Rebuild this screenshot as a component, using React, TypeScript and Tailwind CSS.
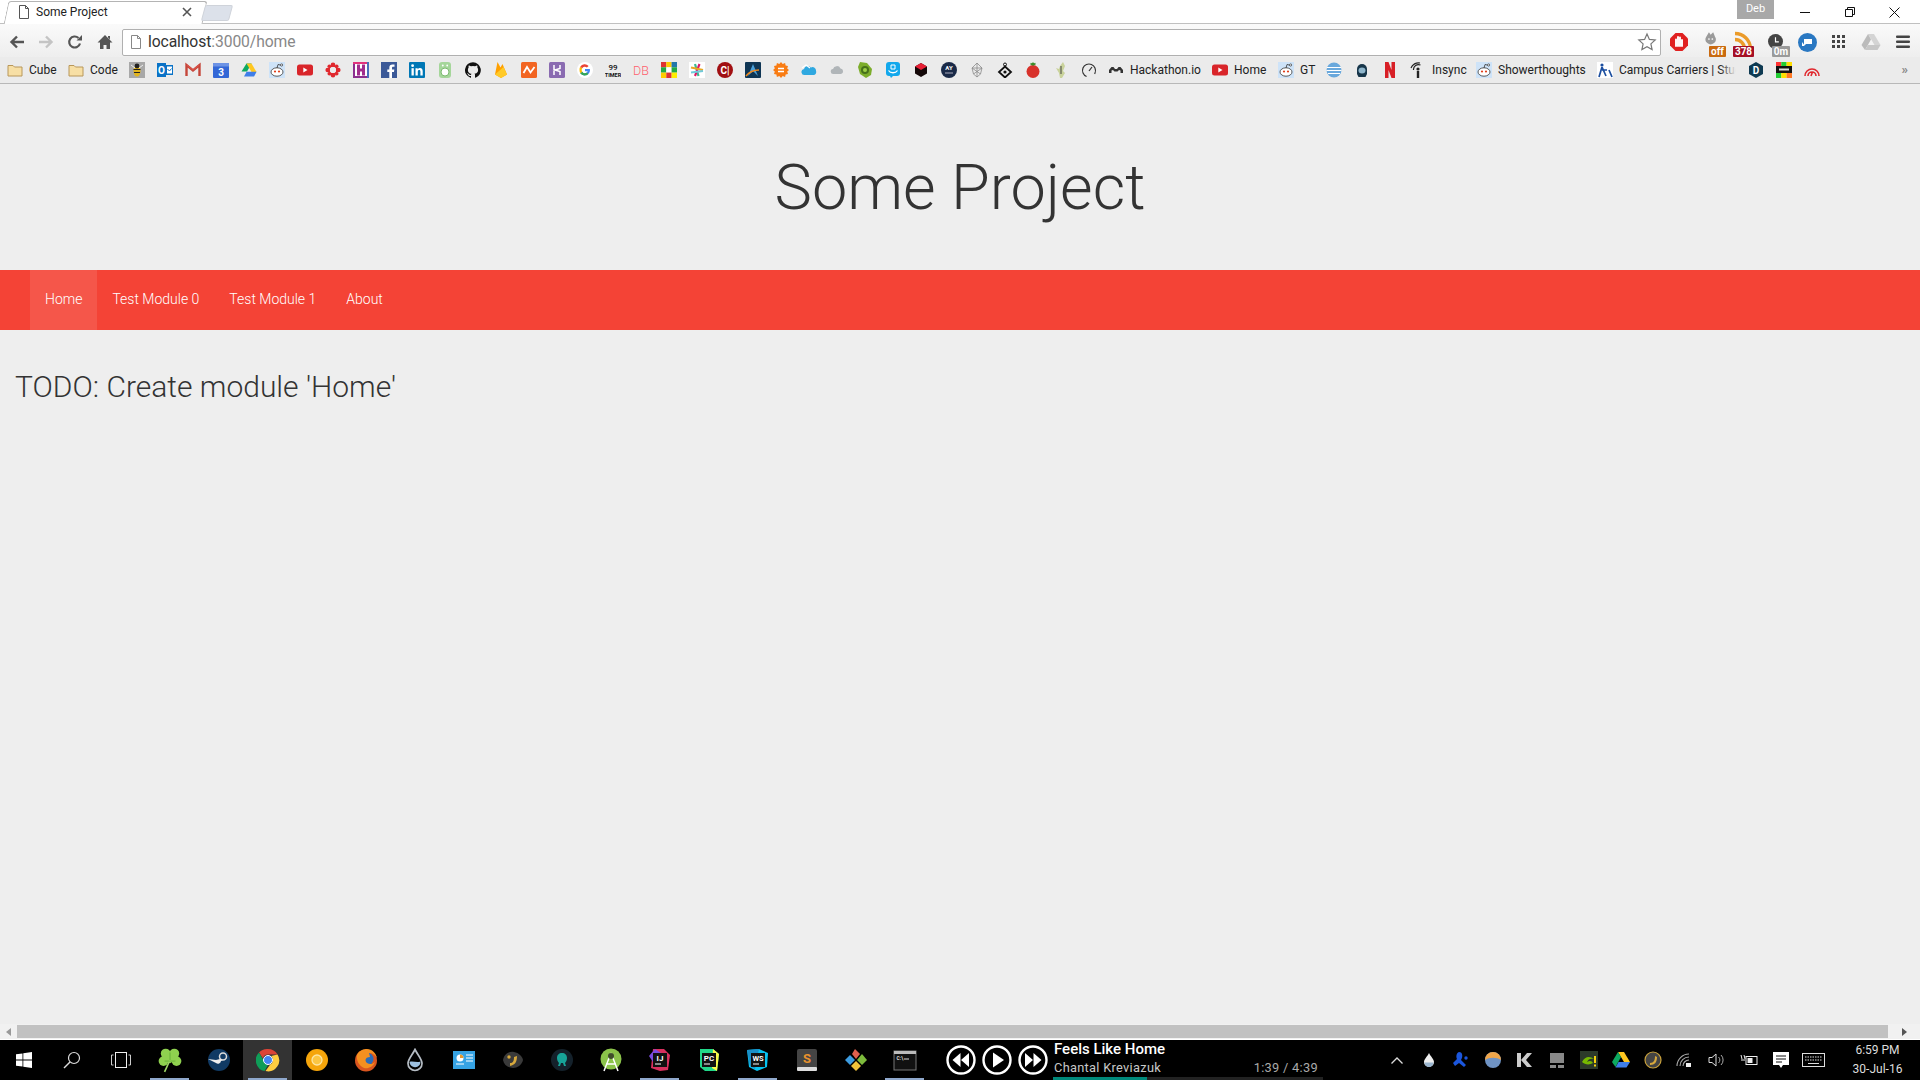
import React from "react";

type P = { children: React.ReactNode; s?: number; v?: number };
const I = ({ children, s = 16, v = 16 }: P) => (
  <svg width={s} height={s} viewBox={`0 0 ${v} ${v}`} className="shrink-0 block">
    {children}
  </svg>
);

const Folder = () => (
  <I>
    <path d="M1 3.5h5l1.5 1.5H15v9H1z" fill="#f7dfa5" stroke="#b8975a" />
  </I>
);
const PageIcon = ({ c = "#555" }: { c?: string }) => (
  <I>
    <path d="M3.5 1.5h6l3 3v10h-9z M9.5 1.5v3h3" fill="#fff" stroke={c} />
  </I>
);
const Reddit = () => (
  <I>
    <rect width="16" height="16" fill="#cee3f8" />
    <ellipse cx="8" cy="10" rx="6" ry="4.2" fill="#fff" stroke="#333" strokeWidth=".8" />
    <circle cx="6" cy="9.5" r="1.1" fill="#e0401c" />
    <circle cx="10" cy="9.5" r="1.1" fill="#e0401c" />
    <path d="M8 6l1-3.5 3 .7" stroke="#333" fill="none" strokeWidth=".8" />
    <circle cx="12.6" cy="3" r="1.1" fill="#fff" stroke="#333" strokeWidth=".7" />
  </I>
);
const Yt = () => (
  <I>
    <rect y="2.5" width="16" height="11" rx="2.5" fill="#d9252a" />
    <path d="M6.3 5.5v5l4.2-2.5z" fill="#fff" />
  </I>
);
const Txt = ({ t, x = 8, y = 12, z = 10, c = "#fff", w = 700 }: { t: string; x?: number; y?: number; z?: number; c?: string; w?: number }) => (
  <text x={x} y={y} fontSize={z} fill={c} fontWeight={w} textAnchor="middle" fontFamily="Roboto, sans-serif">
    {t}
  </text>
);
const Drive = () => (
  <I>
    <path d="M5.5 1.5h5L6 9.5H.5z" fill="#0da960" />
    <path d="M5.5 1.5h5l5 8.5h-5z" fill="#ffc720" />
    <path d="M3 14.500h10l2.600-4.700H5.600z" fill="#3f7ee8" />
  </I>
);

const icons: React.ReactNode[] = [
  <I><rect width="16" height="16" fill="#a8a8a8" /><ellipse cx="8" cy="9" rx="3.500" ry="5.500" fill="#e3b51c" /><path d="M4.500 7.500h7M5 10.500h6" stroke="#222" strokeWidth="1.200" /><circle cx="8" cy="4" r="2.400" fill="#222" /><path d="M2 3l4 3M14 3l-4 3" stroke="#eee" /></I>,
  <I><rect width="9" height="14" y="1" fill="#0a72c6" /><rect x="9" y="3" width="7" height="10" fill="#0a72c6" /><rect x="10" y="4.500" width="5" height="7" fill="#fff" /><path d="M10.500 7l2 2 2-2.500" stroke="#0a72c6" fill="none" /><Txt t="O" x={4.500} y={12} z={10} /></I>,
  <I><path d="M1.500 14V3l6.500 5.500L14.500 3v11" fill="none" stroke="#c5463a" strokeWidth="2.400" /><path d="M2 3l6 5 6-5" fill="none" stroke="#d9534a" strokeWidth="1.200" /></I>,
  <I><rect y="1" width="16" height="15" rx="1" fill="#3367d6" /><rect y="1" width="16" height="3.500" fill="#6d93e5" /><Txt t="3" y={13.500} z={10} /></I>,
  <Drive />,
  <Reddit />,
  <Yt />,
  <I><circle cx="8" cy="8" r="4.200" fill="none" stroke="#e0282e" strokeWidth="2" /><circle cx="8" cy="2.700" r="2.300" fill="#e0282e" /><circle cx="8" cy="13.300" r="2.300" fill="#e0282e" /><circle cx="2.700" cy="8" r="2.300" fill="#e0282e" /><circle cx="13.300" cy="8" r="2.300" fill="#e0282e" /><circle cx="4.300" cy="4.300" r="1.800" fill="#e0282e" /><circle cx="11.700" cy="4.300" r="1.800" fill="#e0282e" /><circle cx="4.300" cy="11.700" r="1.800" fill="#e0282e" /><circle cx="11.700" cy="11.700" r="1.800" fill="#e0282e" /></I>,
  <I><rect width="16" height="16" fill="#8c2f8f" /><rect x="2" y="2" width="12" height="12" fill="#fff" /><path d="M0 0h16v2H0z" fill="#e2337d" /><path d="M14 0h2v16h-2z" fill="#4a6fbc" /><path d="M4 2.500h3v4h2v-4h3v11H9v-4H7v4H4z" fill="#a12d8c" /></I>,
  <I><rect width="16" height="16" fill="#3b5998" /><path d="M11 16v-6h2l.3-2.500H11V6c0-.7.3-1.200 1.300-1.200h1.200V2.600c-.5 0-1.200-.1-2-.1-2 0-3.200 1.200-3.200 3.200v1.800h-2V10h2v6z" fill="#fff" /></I>,
  <I><rect width="16" height="16" rx="1" fill="#0077b5" /><rect x="2.500" y="6.200" width="2.300" height="7.300" fill="#fff" /><circle cx="3.600" cy="3.700" r="1.400" fill="#fff" /><path d="M6.500 6.200h2.200v1c.5-.8 1.300-1.200 2.300-1.200 2 0 2.700 1.300 2.700 3.300v4.200h-2.300V9.800c0-1-.3-1.700-1.200-1.700s-1.400.7-1.400 1.700v3.700H6.500z" fill="#fff" /></I>,
  <I><rect x="2" y="0" width="12" height="16" rx="3" fill="#a5d69a" /><circle cx="8" cy="10" r="4" fill="#fff" stroke="#7cb96f" /><circle cx="5.800" cy="3.500" r=".9" fill="#fff" /><circle cx="10.200" cy="3.500" r=".9" fill="#fff" /></I>,
  <I><path d="M8 .2a8 8 0 0 0-2.500 15.600c.4.100.5-.2.500-.4v-1.400c-2.200.5-2.700-1-2.700-1-.4-.9-.9-1.200-.9-1.200-.7-.5.100-.5.100-.5.800.100 1.200.8 1.200.8.700 1.200 1.900.9 2.300.7.100-.5.300-.9.500-1.100-1.800-.2-3.600-.9-3.600-4 0-.9.300-1.600.8-2.100-.1-.2-.4-1 .1-2.100 0 0 .7-.2 2.200.8a7.500 7.500 0 0 1 4 0c1.500-1 2.200-.8 2.200-.8.400 1.100.2 1.900.1 2.100.5.600.8 1.300.8 2.100 0 3.100-1.900 3.700-3.600 3.900.3.200.5.700.5 1.500v2.200c0 .2.100.5.600.4A8 8 0 0 0 8 .2z" fill="#111" /></I>,
  <I><path d="M2 12.500L4.500 0l3 5.500L9.500 2 14 12.500 8 16z" fill="#ffa000" /><path d="M2 12.500L8 16l6-3.500L10.500 5z" fill="#ffca28" /></I>,
  <I><rect width="16" height="16" rx="1.500" fill="#f26522" /><path d="M2.500 11L6 5l3.500 5.500L13.500 5" fill="none" stroke="#fff" strokeWidth="1.800" /></I>,
  <I><rect width="16" height="16" rx="1.500" fill="#8a6bb1" /><path d="M5 3v10M11 3v3.500L6 8l5 1.500V13" fill="none" stroke="#fff" strokeWidth="1.500" /></I>,
  <I><circle cx="8" cy="8" r="8" fill="#fff" /><path d="M12.800 7H8v2.200h2.700a3 3 0 0 1-5.500.5l-2 1.600A5.500 5.500 0 0 0 13 8a5 5 0 0 0-.2-1z" fill="#4285f4" /><path d="M3.200 11.300A5.500 5.500 0 0 0 11.500 12l-1.800-1.500a3 3 0 0 1-4.500-.8z" fill="#34a853" /><path d="M2.500 8c0 1.200.3 2.400.7 3.300l2-1.600a3 3 0 0 1 0-3.400l-2-1.600A5.500 5.500 0 0 0 2.500 8z" fill="#fbbc05" /><path d="M3.200 4.700l2 1.600a3 3 0 0 1 4.700-.7l1.700-1.700a5.500 5.500 0 0 0-8.400.8z" fill="#ea4335" /></I>,
  <I><Txt t="99" y={7.500} z={8} c="#111" w={500} /><Txt t="TIMER" y={15} z={5.500} c="#111" /></I>,
  <I><Txt t="DB" y={13} z={12.500} c="#ff5f6d" w={300} /></I>,
  <I><rect width="5.300" height="5.300" fill="#d33" /><rect x="5.300" width="5.300" height="5.300" fill="#fc0" /><rect x="10.600" width="5.400" height="5.300" fill="#27a" /><rect y="5.300" width="5.300" height="5.300" fill="#2a4" /><rect x="5.300" y="5.300" width="5.300" height="5.300" fill="#fff" /><rect x="10.600" y="5.300" width="5.400" height="5.300" fill="#2a4" /><rect y="10.600" width="5.300" height="5.400" fill="#fc0" /><rect x="5.300" y="10.600" width="5.300" height="5.400" fill="#d33" /><rect x="10.600" y="10.600" width="5.400" height="5.400" fill="#fe0" /></I>,
  <I><rect width="16" height="16" fill="#fff" /><path d="M6 2l3.500 12" stroke="#3eb890" strokeWidth="2.200" /><path d="M10.500 2L6 14" stroke="#e01765" strokeWidth="2.200" /><path d="M2 5.500l12 2.500" stroke="#e8a723" strokeWidth="2.200" /><path d="M2 10.500l12-1.500" stroke="#70cadb" strokeWidth="2.200" /></I>,
  <I><circle cx="8" cy="8" r="8" fill="#a10f12" /><Txt t="C|" y={12} z={10} /></I>,
  <I><rect width="16" height="16" rx="1" fill="#0e3554" /><path d="M3 14L8 2l5 12-5-5z" fill="#4a9fd8" /><path d="M1 14c4-5 8-6 13-6" stroke="#f28a1e" strokeWidth="1.500" fill="none" /></I>,
  <I><path d="M8 0l1.700 2 2.400-1 .5 2.600L15 4l-.8 2.400L16 8l-1.800 1.600.8 2.400-2.400.4-.5 2.600-2.400-1L8 16l-1.700-2-2.400 1-.5-2.600L1 12l.8-2.400L0 8l1.800-1.600L1 4l2.400-.4L3.900 1l2.400 1z" fill="#f97c13" /><path d="M5 6.500h6M5 9.500h6" stroke="#fff" strokeWidth="1.500" /></I>,
  <I><path d="M4 13a3 3 0 0 1-1-6 4 4 0 0 1 7-1.500A3.500 3.500 0 0 1 15 9a3 3 0 0 1-2 4z" fill="#2fa8e0" /><path d="M1 6l4-3 4 3" fill="none" stroke="#fff" strokeWidth="1.200" /></I>,
  <I><path d="M4.500 12a2.500 2.500 0 0 1-.5-5 4 4 0 0 1 7.500-.5 2.800 2.800 0 0 1 .5 5.500z" fill="#b0b5b8" /></I>,
  <I><path d="M3 0l7 1 5 6-1 6-5 3-6-4-2-7z" fill="#7cad2b" /><circle cx="8" cy="8" r="4" fill="#46711a" /><circle cx="8" cy="8" r="2" fill="#9ccf46" /></I>,
  <I><rect x="1" width="14" height="14" rx="3" fill="#12a8ec" /><path d="M6 16l2-2h-3z" fill="#12a8ec" /><path d="M6 3h4v4H6z" fill="none" stroke="#fff" /><path d="M3.500 8.500c2 3 7 3 9 0" fill="none" stroke="#fff" strokeWidth="1.300" /></I>,
  <I><path d="M8 1l6 3.500v7L8 15l-6-3.500v-7z" fill="#140808" /><path d="M8 1l6 3.500L8 8 2 4.500z" fill="#e81f35" /></I>,
  <I><circle cx="8" cy="8" r="8" fill="#1a2a48" /><Txt t="AY" y={8} z={6} /><path d="M4 11h8" stroke="#aab" /></I>,
  <I><path d="M8 1l5 5-1.500 6L8 15l-3.500-3L3 6z M3 6h10M8 1v14M4.500 12L13 6M11.500 12L3 6" fill="none" stroke="#8c8c8c" strokeWidth=".8" /></I>,
  <I><path d="M8 4.500L14 10l-6 5.500L2 10z" fill="none" stroke="#111" strokeWidth="1.800" /><circle cx="8" cy="2.500" r="1.500" fill="none" stroke="#111" /><circle cx="8" cy="10" r="1.600" fill="#111" /></I>,
  <I><circle cx="8" cy="9.500" r="6.500" fill="#d8322b" /><path d="M8 3L5.500 1.500M8 3l2.500-1.500M8 3V.5" stroke="#3d8c2a" strokeWidth="1.500" /></I>,
  <I><path d="M10 0l2 4-2 5 2 2-3 5H7L6 11 3 6l3 1 1-3z" fill="#c9d29b" /><path d="M8 4v8" stroke="#444" /></I>,
  <I><circle cx="8" cy="8.500" r="6.500" fill="none" stroke="#333" strokeWidth="1.200" strokeDasharray="31 10" transform="rotate(112 8 8.500)" /><path d="M8 9l3-4" stroke="#333" strokeWidth="1.200" /></I>,
];

const Link = ({ icon, label, cls = "" }: { icon: React.ReactNode; label: string; cls?: string }) => (
  <div className={`flex items-center gap-[6px] h-6 text-[12px] text-[#222] ${cls}`}>
    {icon}
    <span className="whitespace-nowrap">{label}</span>
  </div>
);

const Cell = ({ children }: { children: React.ReactNode }) => (
  <div className="w-[28px] flex justify-center shrink-0">{children}</div>
);

const TopBar = () => (
  <div className="h-[24px] bg-white flex items-end relative border-b border-[#c0c0c0] font-['Roboto',sans-serif]">
    <div className="ml-[2px] w-[199px] h-[23px] border-t border-x border-[#b4b4b4] rounded-t-[3px] -skew-x-[12deg] bg-white absolute left-[4px] top-[1px] border-b-0" />
    <div className="w-[199px] h-[24px] relative flex items-center pl-[16px] pt-[2px] text-[12px] text-[#222] gap-[4px]">
      <PageIcon />
      <span>Some Project</span>
      <svg width="10" height="10" viewBox="0 0 10 10" className="absolute left-[182px] top-[8px]"><path d="M1 1l8 8M9 1l-8 8" stroke="#555" strokeWidth="1.600" /></svg>
    </div>
    <div className="w-[28px] h-[16px] ml-[4px] mb-[2px] rounded-[2px] -skew-x-[15deg] bg-[#dce1ea] border border-[#cfd3da]" />
    <div className="flex-1" />
    <div className="absolute right-[146px] top-0 w-[37px] h-[19px] bg-[#a8a8a8] text-white text-[11px] flex items-center justify-center">Deb</div>
    <div className="absolute right-[3px] top-0 h-[24px] flex">
      <div className="w-[45px] flex items-center justify-center"><svg width="10" height="10" viewBox="0 0 10 10"><path d="M0 5.500h10" stroke="#111" /></svg></div>
      <div className="w-[45px] flex items-center justify-center"><svg width="10" height="10" viewBox="0 0 10 10"><path d="M.5 2.500h7v7h-7zM2.500 2.500v-2h7v7h-2" fill="none" stroke="#111" /></svg></div>
      <div className="w-[45px] flex items-center justify-center"><svg width="11" height="11" viewBox="0 0 11 11"><path d="M.5.500l10 10M10.500.500l-10 10" stroke="#111" /></svg></div>
    </div>
  </div>
);

const Badge = ({ t, c, cls }: { t: string; c: string; cls: string }) => (
  <span className={`absolute bottom-0 h-[11px] text-white text-[10px] font-bold leading-[11px] flex justify-center rounded-[1px] ${c} ${cls}`}>{t}</span>
);

const Toolbar = () => (
  <div className="h-[33px] flex items-center bg-gradient-to-b from-[#fafafa] to-[#eeeeee] pl-[3px] pt-[3px] font-['Roboto',sans-serif] overflow-hidden">
    <div className="w-[28px] flex justify-center shrink-0"><svg width="16" height="16" viewBox="0 0 16 16"><path d="M15 8H3M8 2.500L2.500 8 8 13.500" fill="none" stroke="#555" strokeWidth="2.400" /></svg></div>
    <div className="w-[29px] flex justify-center shrink-0"><svg width="16" height="16" viewBox="0 0 16 16"><path d="M1 8h12M8 2.500L13.500 8 8 13.500" fill="none" stroke="#c4c4c4" strokeWidth="2.400" /></svg></div>
    <div className="w-[30px] flex justify-center shrink-0"><svg width="16" height="16" viewBox="0 0 16 16"><path d="M13 9.500A5.500 5.500 0 1 1 11.500 4" fill="none" stroke="#555" strokeWidth="2.200" /><path d="M9.500 6.500h5.500V1z" fill="#555" /></svg></div>
    <div className="w-[29px] flex justify-center shrink-0"><svg width="16" height="16" viewBox="0 0 16 16"><path d="M8 1L.5 8.500H3V15h3.500v-4h3v4H13V8.500h2.500zM11 2h2v3.500l-2-2z" fill="#555" /></svg></div>
    <div className="ml-[3px] h-[27px] w-[1539px] bg-white border border-[#b0b0b0] rounded-[2px] flex items-center pl-[5px] pr-[3px] shrink-0">
      <PageIcon c="#888" />
      <span className="ml-[4px] text-[15.700px] tracking-[-0.1px]"><span className="text-[#333]">localhost</span><span className="text-[#888]">:3000/home</span></span>
      <div className="flex-1" />
      <svg width="20" height="20" viewBox="0 0 20 20"><path d="M10 2l2.400 5.400 5.800.6-4.300 3.900 1.200 5.700L10 14.800l-5.100 2.800 1.200-5.700L1.800 8l5.800-.6z" fill="#fff" stroke="#777" strokeWidth="1.200" /></svg>
    </div>
    <div className="flex items-center shrink-0">
      <div className="w-[36px] flex justify-center shrink-0"><svg width="18" height="18" viewBox="0 0 18 18"><path d="M5.500 0h7L18 5.500v7L12.500 18h-7L0 12.500v-7z" fill="#e02020" /><path d="M6 13V6.500M8 13V4M10 13V4.500M12 13V7" stroke="#fff" strokeWidth="1.900" strokeLinecap="round" /></svg></div>
      <div className="w-[32px] h-[30px] relative shrink-0">
        <svg width="17" height="18" viewBox="0 0 20 18" className="absolute left-[6px] top-[3px]"><path d="M4 6l3-5 2 3 3-3 2 5a6 6 0 1 1-10 0z" fill="#9a9a9a" /><circle cx="7" cy="9" r="1" fill="#fff" /><circle cx="11" cy="9" r="1" fill="#fff" /></svg>
        <Badge t="off" c="bg-[#c96a10]" cls="left-[12px] w-[17px]" />
      </div>
      <div className="w-[28px] h-[30px] relative shrink-0">
        <svg width="19" height="19" viewBox="0 0 19 19" className="absolute left-[5px] top-[4px]"><path d="M1 2.500a15.500 15.500 0 0 1 15.500 15.500M1 8.500A9.500 9.500 0 0 1 10.500 18" fill="none" stroke="#eb9b2a" strokeWidth="3.300" /></svg>
        <Badge t="378" c="bg-[#a50f25]" cls="left-[4px] w-[21px]" />
      </div>
      <div className="w-[38px] h-[30px] relative shrink-0">
        <svg width="15" height="15" viewBox="0 0 18 18" className="absolute left-[11px] top-[7px]"><circle cx="9" cy="9" r="9" fill="#444" /><path d="M9 4v5.500h4" stroke="#fff" fill="none" strokeWidth="1.400" /></svg>
        <Badge t="0m" c="bg-[#9a9a9a]" cls="left-[15px] w-[18px]" />
      </div>
      <div className="w-[24px] flex justify-center shrink-0"><svg width="19" height="19" viewBox="0 0 19 19"><circle cx="9.500" cy="9.500" r="9.500" fill="#2a78c2" /><path d="M6 6h8v5H8l-2 2zM4 9v4h3" fill="#fff" /></svg></div>
      <div className="w-[40px] flex justify-center shrink-0"><svg width="14" height="14" viewBox="0 0 14 14" fill="#444"><rect width="3" height="3" /><rect x="5" width="3" height="3" /><rect x="10" width="3" height="3" /><rect y="5" width="3" height="3" /><rect x="5" y="5" width="3" height="3" /><rect x="10" y="5" width="3" height="3" /><rect y="10" width="3" height="3" /><rect x="5" y="10" width="3" height="3" /><rect x="10" y="10" width="3" height="3" /></svg></div>
      <div className="w-[24px] flex justify-center shrink-0"><svg width="20" height="18" viewBox="0 0 20 18"><path d="M7 1h6l6.500 11h-6z" fill="#d4d4d4" /><path d="M7 1l3 5.500L4 17 .5 12z" fill="#bbb" /><path d="M4 17h12.500l3-5H7z" fill="#c7c7c7" /></svg></div>
      <div className="w-[40px] flex justify-center shrink-0"><svg width="14" height="14" viewBox="0 0 14 14" fill="#444"><rect width="14" height="2.500" rx="1" y="0.500" /><rect width="14" height="2.500" rx="1" y="5.500" /><rect width="14" height="2.500" rx="1" y="10.500" /></svg></div>
    </div>
  </div>
);

const Bookmarks = () => (
  <div className="h-[27px] flex items-center bg-[#ebebeb] border-b border-[#b8b8b8] pl-[7px] font-['Roboto',sans-serif] relative">
    <Link icon={<Folder />} label="Cube" cls="w-[61px] shrink-0" />
    <Link icon={<Folder />} label="Code" cls="w-[55px] shrink-0" />
    <div className="flex items-center">
      {icons.map((ic, i) => (
        <Cell key={i}>{ic}</Cell>
      ))}
    </div>
    <div className="ml-[5px] flex items-center">
      <Link cls="w-[104px] shrink-0" icon={<I><path d="M1 8l2.500-3h2L7 7h2l1.500-2h2L15 8v3h-2.500V8.500L11 8 9.500 9.500h-3L5 8l-1.500.5V11H1z" fill="#333" /></I>} label="Hackathon.io" />
      <Link cls="w-[66px] shrink-0" icon={<Yt />} label="Home" />
      <Link cls="w-[42px] shrink-0" icon={<Reddit />} label="GT" />
      <Cell><I><circle cx="8" cy="8" r="7.500" fill="#69a8dc" /><path d="M1 5.500h14M.5 8.500h15M2 11.500h12" stroke="#fff" /></I></Cell>
      <Cell><I><path d="M3 7a5 5 0 0 1 10 0v5l-1.500 3h-7L3 12z" fill="#17364a" /><ellipse cx="8" cy="8.500" rx="3.500" ry="3" fill="#8fb6cc" /></I></Cell>
      <Cell><I><path d="M3 0h3.500l3 8V0H13v16H9.500l-3-8v8H3z" fill="#d81f26" /></I></Cell>
      <div className="w-[6px] shrink-0" />
      <Link cls="w-[66px] shrink-0" icon={<I><path d="M8 16V9" stroke="#222" strokeWidth="2.400" /><circle cx="8" cy="7" r="1.600" fill="#222" /><path d="M3.500 8a5 5 0 0 1 7-5M1 6a8 8 0 0 1 9-5" fill="none" stroke="#222" strokeWidth="1.200" /></I>} label="Insync" />
      <Link cls="w-[121px] shrink-0" icon={<Reddit />} label="Showerthoughts" />
      <div className="w-[139px] shrink-0 overflow-hidden relative">
        <Link icon={<I><rect width="16" height="16" fill="#fff" /><circle cx="5" cy="3" r="1.600" fill="#1c4fa0" /><path d="M5 5l-3 10M5 5l4 9M5 8h5M12 8l3 7" stroke="#1c4fa0" strokeWidth="1.700" fill="none" /></I>} label="Campus Carriers | Stuc" />
        <div className="absolute right-0 top-0 h-6 w-[16px] bg-gradient-to-r from-transparent to-[#ebebeb]" />
      </div>
      <div className="w-[6px] shrink-0" />
      <Cell><I><path d="M8 0l7 4v8l-7 4-7-4V4z" fill="#0e3a52" /><Txt t="D" y={12} z={10} /></I></Cell>
      <Cell><I><rect width="5.300" height="4" fill="#f33" /><rect x="5.300" width="5.300" height="4" fill="#2c3" /><rect x="10.600" width="5.400" height="4" fill="#fd0" /><rect y="4" width="16" height="7" fill="#111" /><rect x="3" y="6.500" width="10" height="2" fill="#ddd" /><rect y="11" width="5.300" height="5" fill="#2c3" /><rect x="5.300" y="11" width="5.300" height="5" fill="#fd0" /><rect x="10.600" y="11" width="5.400" height="5" fill="#f72" /></I></Cell>
      <Cell><I><path d="M1 14a7 7 0 0 1 14 0M4 14a4 4 0 0 1 8 0M7 14l1.500-4" fill="none" stroke="#e0282e" strokeWidth="1.600" /></I></Cell>
    </div>
    <div className="flex-1" />
    <span className="mr-[12px] text-[13px] font-bold text-[#888]">»</span>
  </div>
);

const Main = () => (
  <div className="h-[940px] bg-[#eeeeee] flex flex-col font-['Roboto',sans-serif]">
    <div className="h-[186px] pt-[21px] flex items-center justify-center shrink-0">
      <h1 className="text-[63px] font-light text-[#333] leading-none">Some Project</h1>
    </div>
    <nav className="h-[60px] bg-[#f44336] flex pl-[30px] text-[14px] font-light text-white shrink-0">
      <a className="px-[15px] pb-[1px] flex items-center bg-white/10">Home</a>
      <a className="px-[15px] pb-[1px] flex items-center">Test Module 0</a>
      <a className="px-[15px] pb-[1px] flex items-center">Test Module 1</a>
      <a className="px-[15px] pb-[1px] flex items-center">About</a>
    </nav>
    <h3 className="mt-[41px] pl-[15px] text-[30px] leading-[32px] font-light text-[#333]">TODO: Create module 'Home'</h3>
  </div>
);

const ScrollBar = () => (
  <div className="h-[15px] bg-[#f1f1f1] flex items-start pt-[1px]">
    <div className="w-[17px] h-[13px] flex items-center justify-center"><svg width="6" height="8" viewBox="0 0 6 8"><path d="M5 0v8L0 4z" fill="#999" /></svg></div>
    <div className="w-[1871px] h-[13px] bg-[#c1c1c1]" />
    <div className="flex-1 h-[13px] flex items-center justify-center"><svg width="6" height="8" viewBox="0 0 6 8"><path d="M1 0v8l5-4z" fill="#555" /></svg></div>
  </div>
);

const tb: { n: React.ReactNode; u?: boolean; a?: boolean }[] = [
  { u: true, n: <I s={26} v={24}><g fill="#8fd14f"><circle cx="8" cy="6" r="4.500" /><circle cx="16" cy="6" r="4.500" /><circle cx="6" cy="13" r="4.500" /><circle cx="18" cy="13" r="4.500" /><path d="M12 6l5 6-5 3-5-3z" /></g><path d="M12 12l-5 11" stroke="#9fd866" strokeWidth="1.500" /><path d="M12 5v7M7 13h10" stroke="#5ba82f" strokeWidth=".7" /></I> },
  { n: <I s={24} v={24}><circle cx="12" cy="12" r="11" fill="#103a64" /><circle cx="16" cy="8.500" r="3.500" fill="none" stroke="#ddd" strokeWidth="1.500" /><path d="M1 11l8 4a3 3 0 0 0 5-2l2-1-3-1-4 1z" fill="#eee" /></I> },
  { u: true, a: true, n: <I s={24} v={24}><path d="M12 1a11 11 0 0 1 9.500 5.500H12a5.500 5.500 0 0 0-5.200 3.800L3 4.500A11 11 0 0 1 12 1z" fill="#db4437" /><path d="M3 4.500l5.200 9A5 5 0 0 0 12 17l-3.500 6A11 11 0 0 1 3 4.500z" fill="#0f9d58" /><path d="M21.500 6.500A11 11 0 0 1 9.500 23l4.700-6.500A5 5 0 0 0 16 9l-1-1z" fill="#ffcd40" /><circle cx="12" cy="12" r="4.500" fill="#4285f4" stroke="#fff" strokeWidth="1" /></I> },
  { n: <I s={24} v={24}><circle cx="12" cy="12" r="11" fill="#f5a50b" /><circle cx="12" cy="12" r="5" fill="#fbc644" stroke="#fde6a3" strokeWidth="1.300" /></I> },
  { n: <I s={24} v={24}><circle cx="12" cy="12.500" r="11" fill="#d9551f" /><circle cx="13" cy="11" r="6.500" fill="#2c6cb8" /><path d="M3 7c2-5 7-6 10-6 5 0 9 4 10 9-2-3-4-5-8-5l1 4c-4 0-6 3-3 6 3 2 6 1 8-1-2 5-7 7-11 6C5 18 2 12 3 7z" fill="#f5901f" /></I> },
  { n: <I s={24} v={24}><path d="M12 1.500c3 6 7 9.500 7 14a7 7 0 0 1-14 0c0-4.500 4-8 7-14z" fill="none" stroke="#b5bcc4" strokeWidth="1.700" /><path d="M6.500 14c3-1.500 7 1 11-.5a5.500 5.500 0 0 1-11 .5z" fill="#9dc0e0" /></I> },
  { n: <I s={24} v={24}><rect x="1" y="3" width="22" height="18" fill="#36a3e4" /><circle cx="8" cy="10" r="3.500" fill="#fff" /><path d="M8 6.500a3.500 3.500 0 0 1 3.500 3.500H8z" fill="#e59a2f" /><path d="M14 7h7M14 10h7M14 13h7M4 16h8" stroke="#fff" /></I> },
  { n: <I s={24} v={24}><path d="M2 12c1-6 6-9 11-8 5 1 8 4 9 8-1 5-6 8-10 8-5 0-9-3-10-8z" fill="#3a3a3a" /><path d="M9 15c3 0 4-2 4-6l3-1c0 6-2 9-7 10z" fill="#d8a93c" /><circle cx="8" cy="9" r="1.700" fill="#d8a93c" /></I> },
  { n: <I s={24} v={24}><circle cx="12" cy="12" r="11" fill="#14212b" /><path d="M12 5c3 0 5 2 5 5 0 2-1 4-2 5l1 3h-2l-1-3h-2l-1 3H8l1-3c-1-1-2-3-2-5 0-3 2-5 5-5z" fill="#17a398" /></I> },
  { u: false, n: <I s={24} v={24}><circle cx="12" cy="11" r="10.500" fill="#8bc34a" /><path d="M12 5l-7 18M12 5l7 18M7 16h10" stroke="#fff" strokeWidth="1.500" /><circle cx="12" cy="8" r="3" fill="#3f4d2a" /></I> },
  { u: true, n: <I s={24} v={24}><path d="M5 1h11l6 6-2 15-8 1-9-3z" fill="#d9305e" /><path d="M1 8l6-7 6 4-6 12z" fill="#7b4ce0" /><rect x="5" y="5" width="14" height="14" fill="#111" /><Txt t="IJ" x={12} y={13} z={8} /><path d="M7 16h6" stroke="#fff" /></I> },
  { u: false, n: <I s={24} v={24}><path d="M3 1h13l6 5-2 17-12 0-5-4z" fill="#21d789" /><path d="M16 1l6 5-2 17-5-3z" fill="#fcf84a" /><rect x="5" y="5" width="14" height="14" fill="#111" /><Txt t="PC" x={12} y={13} z={8} /><path d="M7 16h6" stroke="#fff" /></I> },
  { u: true, n: <I s={24} v={24}><path d="M1 2l12-1 9 4-1 14-10 4-8-4z" fill="#07c3f2" /><path d="M1 2l12-1-4 20-5-3z" fill="#1a8fc8" /><rect x="5" y="5" width="14" height="14" fill="#111" /><Txt t="WS" x={12} y={13} z={7.500} /><path d="M7 16h6" stroke="#fff" /></I> },
  { n: <I s={24} v={24}><rect x="2" y="1" width="20" height="20" rx="2" fill="#444" /><rect x="2" y="19" width="20" height="4" rx="1" fill="#ddd" /><Txt t="S" x={12} y={15} z={13} c="#e8912d" /></I> },
  { u: false, n: <I s={24} v={24}><path d="M11 1l5 5-4 5-4-5z" fill="#e0604d" /><path d="M1 12l5-5 5 5-5 5z" fill="#3d9ce0" /><path d="M18 6l5 6-5 5-5-5z" fill="#7dbb3c" /><path d="M12 13l5 5-5 5-5-5z" fill="#efc23a" /></I> },
  { u: true, n: <I s={24} v={24}><rect x="1" y="3" width="22" height="19" fill="#111" stroke="#777" /><rect x="1" y="3" width="22" height="3" fill="#bbb" /><Txt t="C:\" x={7} y={12} z={5} c="#ddd" /><path d="M11 11h5" stroke="#ddd" /></I> },
];

const tray: React.ReactNode[] = [
  <svg width="12" height="7" viewBox="0 0 12 7"><path d="M.5 6.500L6 1l5.500 5.500" stroke="#ddd" fill="none" strokeWidth="1.300" /></svg>,
  <I s={16} v={16}><path d="M8 1c2 4 5 6 5 9a5 5 0 0 1-10 0c0-3 3-5 5-9z" fill="#eee" /><path d="M3.500 10.500h9a4.500 4.500 0 0 1-9 0z" fill="#9ab5cf" /></I>,
  <I s={18} v={18}><path d="M7 1c4 0 4 5 2 8l5 5-2 2-5-4-4 3-2-3 4-4C4 6 4 2 7 1z" fill="#1b56dd" /><circle cx="14" cy="7" r="1.700" fill="#1b56dd" /></I>,
  <I s={18} v={18}><circle cx="9" cy="9" r="8" fill="#6f93c4" /><path d="M1 9a8 8 0 0 1 16 0c-4-3-12-3-16 0z" fill="#f0a64a" /></I>,
  <I s={18} v={18}><path d="M1 2h4v14H1zM5 9l6-7h5l-6 7 6 7h-5z" fill="#ccc" /></I>,
  <I s={16} v={16}><rect x="1" y="1" width="14" height="10" fill="#888" /><rect x="1" y="13" width="6" height="3" fill="#888" /><rect x="9" y="13" width="6" height="3" fill="#888" /></I>,
  <I s={18} v={18}><rect width="18" height="18" fill="#2c3a2a" /><path d="M2 11c3-6 8-6 12-3-3-1-6 0-7 3 3-2 5-1 6 1-3 2-8 2-11-1z" fill="#76b900" /><rect x="14" y="5" width="2" height="7" fill="#f4d00c" /><rect x="14" y="13.500" width="2" height="2" fill="#f4d00c" /></I>,
  <I s={18} v={18}><path d="M6 1h6l6 10h-6z" fill="#ffc720" /><path d="M6 1l3 5-5.500 10L0 11z" fill="#0da960" /><path d="M3.500 16.500h11l3.500-5.500H6.500z" fill="#3f7ee8" /></I>,
  <I s={18} v={18}><circle cx="9" cy="9" r="8" fill="#444" stroke="#c9a13b" strokeWidth="1.200" /><path d="M6 12c4 0 5-3 5-7l2 1c0 5-2 8-7 8z" fill="#d8a93c" /></I>,
  <I s={18} v={18}><path d="M1 15a12 12 0 0 1 12-12M4 15a9 9 0 0 1 9-9M7 15a6 6 0 0 1 6-6" fill="none" stroke="#aaa" strokeWidth="1.100" /><rect x="10" y="12" width="5" height="4" fill="#eee" /></I>,
  <I s={18} v={18}><path d="M1 6.500h3L8 3v12l-4-3.500H1z" fill="none" stroke="#ddd" /><path d="M10.500 6a4 4 0 0 1 0 6M13 4a7 7 0 0 1 0 10" fill="none" stroke="#aaa" /></I>,
  <I s={18} v={18}><rect x="6" y="5.500" width="11" height="8" fill="none" stroke="#eee" /><rect x="7.500" y="7" width="5" height="5" fill="#eee" /><path d="M1 9h4M1 4l1 4M4 4l1 4" stroke="#eee" /></I>,
  <I s={18} v={18}><path d="M1 1h16v13h-6l-2 3-2-3H1z" fill="#fff" /><path d="M4 5h10M4 8h10M4 11h6" stroke="#111" /></I>,
  <svg width="23" height="14" viewBox="0 0 23 14"><rect x=".5" y=".5" width="22" height="13" fill="none" stroke="#ddd" /><path d="M3 4h17M3 7h17" stroke="#ddd" strokeDasharray="1.500 1" /><path d="M6 10.500h11" stroke="#ddd" /></svg>,
];

const Round = ({ kind }: { kind: "back" | "play" | "next" }) => (
  <div className="w-[36px] flex justify-center">
    <svg width="30" height="30" viewBox="0 0 30 30">
      <circle cx="15" cy="15" r="13.500" fill="none" stroke="#fff" strokeWidth="2.400" />
      {kind === "play" && <path d="M11 7.500v15L22 15z" fill="#fff" />}
      {kind === "back" && <path d="M14.500 8v14L6.500 15zM23 8v14l-8-7z" fill="#fff" />}
      {kind === "next" && <path d="M7 8v14l8-7zM15.500 8v14l8-7z" fill="#fff" />}
    </svg>
  </div>
);

const Taskbar = () => (
  <div className="h-[41px] bg-black flex items-stretch font-['Roboto',sans-serif] border-t border-[#fff]">
    <div className="w-[48px] flex items-center justify-center"><svg width="16" height="16" viewBox="0 0 16 16" fill="#fff"><path d="M0 2.300l6.500-.9v6.200H0zM7.300 1.300L16 0v7.600H7.300zM0 8.400h6.500v6.200L0 13.700zM7.300 8.400H16V16l-8.700-1.200z" /></svg></div>
    <div className="w-[48px] flex items-center justify-center"><svg width="18" height="18" viewBox="0 0 18 18"><circle cx="11" cy="7" r="5.500" fill="none" stroke="#ddd" strokeWidth="1.200" /><path d="M7 11l-6 6" stroke="#ddd" strokeWidth="1.400" /></svg></div>
    <div className="w-[49px] flex items-center justify-center"><svg width="20" height="16" viewBox="0 0 20 16"><rect x="4.500" y=".5" width="11" height="15" fill="none" stroke="#eee" /><path d="M2.500 3H.5v10h2M17.500 3h2v10h-2" fill="none" stroke="#ccc" /></svg></div>
    {tb.map((t, i) => (
      <div key={i} className={`w-[49px] flex items-center justify-center relative shrink-0 ${t.a ? "bg-[#333333]" : ""}`}>
        {t.n}
        {t.u && <div className="absolute bottom-0 left-[5px] right-[5px] h-[2px] bg-[#8fa8cc]" />}
      </div>
    ))}
    <div className="w-[14px] shrink-0" />
    <div className="flex items-center shrink-0">
      <Round kind="back" />
      <Round kind="play" />
      <Round kind="next" />
    </div>
    <div className="ml-[2px] w-[270px] flex flex-col relative shrink-0">
      <div className="h-[19px] pl-[1px] text-[15px] leading-[18px] text-white font-medium">Feels Like Home</div>
      <div className="h-[18px] pb-[1px] flex justify-between items-center pl-[1px] pr-[5px] text-[12.800px] text-[#aaa] tracking-[0.3px]">
        <span className="text-[#c8c8c8]">Chantal Kreviazuk</span>
        <span>1:39 / 4:39</span>
      </div>
      <div className="h-[3px] bg-[#222] w-[270px]"><div className="h-[3px] w-[94px] bg-[#00897b]" /></div>
    </div>
    <div className="flex-1" />
    <div className="flex items-center">
      {tray.map((t, i) => (
        <div key={i} className="w-[32px] flex justify-center shrink-0">{t}</div>
      ))}
    </div>
    <div className="w-[85px] ml-[6px] flex flex-col items-center justify-center text-[12px] leading-[19px] text-[#ddd]">
      <span>6:59 PM</span>
      <span>30-Jul-16</span>
    </div>
  </div>
);

export default function App() {
  return (
    <div className="w-[1920px] h-[1080px] overflow-hidden flex flex-col">
      <TopBar />
      <Toolbar />
      <Bookmarks />
      <Main />
      <ScrollBar />
      <Taskbar />
    </div>
  );
}
